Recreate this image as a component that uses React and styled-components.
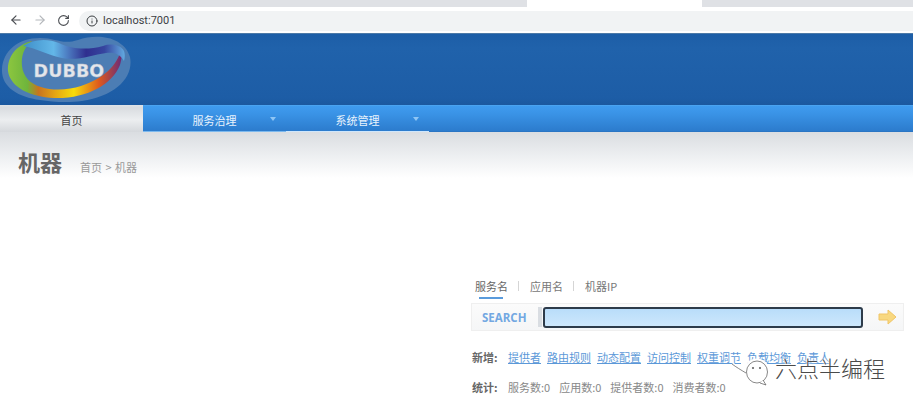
import React from "react";
import styled, { createGlobalStyle } from "styled-components";
import { ArrowLeft, ArrowRight, RotateCw, Info } from "lucide-react";

const Global = createGlobalStyle`
  html, body { margin: 0; padding: 0; background: #fff; }
  body { width: 913px; height: 408px; overflow: hidden; font-family: "Noto Sans CJK SC", "Liberation Sans", sans-serif; }
  * { box-sizing: border-box; }
`;

const Page = styled.div`
  position: relative;
  width: 913px;
  height: 408px;
  overflow: hidden;
  display: flex;
  flex-direction: column;
`;

const TabStrip = styled.div`
  height: 7px;
  background: #dfe1e5;
  display: flex;
  padding-left: 527px;
`;
const ActiveTab = styled.div`
  width: 175px;
  background: #fff;
`;

const Toolbar = styled.div`
  height: 26px;
  background: #fff;
  display: flex;
  align-items: center;
  padding-left: 9px;
`;
const NavIcon = styled.span`
  display: flex;
  width: 15px;
  margin-right: ${(p) => p.$gap}px;
  color: ${(p) => p.$color};
`;
const Omnibox = styled.div`
  flex: 1;
  height: 20px;
  margin-top: 1px;
  background: #f1f3f4;
  border-radius: 10px 0 0 10px;
  display: flex;
  align-items: center;
  gap: 5px;
  padding-left: 7px;
  font: 11px "Roboto", sans-serif;
  color: #3c4043;
`;

const Header = styled.header`
  height: 72px;
  background: linear-gradient(#1d5ea7, #2062ab 20%, #1d5da6 90%, #1b589f);
  border-top: 1px solid #4d7aa8;
  display: flex;
  align-items: flex-start;
`;

const Nav = styled.nav`
  height: 27px;
  display: flex;
  background: linear-gradient(#dfe3e8, #d9dce0 10%, #eceef0 55%, #d5d8dc);
`;
const HomeTab = styled.div`
  width: 143px;
  padding-top: 2px;
  display: flex;
  align-items: center;
  justify-content: center;
  font-size: 11px;
  color: #444;
`;
const NavBar = styled.div`
  flex: 1;
  display: flex;
  background: linear-gradient(#3f9bef, #3a93e6 30%, #2b7acb);
  border-top: 1px solid #4aa3f0;
  box-shadow: inset 0 -1px 0 #2a75c4;
`;
const NavItem = styled.div`
  width: 143px;
  height: 100%;
  padding-top: 2px;
  display: flex;
  align-items: center;
  justify-content: center;
  position: relative;
  font-size: 11px;
  color: #e9f3fd;
  border-bottom: 1px solid ${(p) => p.$line};
`;
const Caret = styled.span`
  position: absolute;
  right: 10px;
  top: 11px;
  width: 0;
  height: 0;
  border-left: 3px solid transparent;
  border-right: 3px solid transparent;
  border-top: 4px solid #8fc6f5;
`;

const TitleBand = styled.div`
  height: 46px;
  background: linear-gradient(#dadde1, #eef0f2 55%, #fff);
  display: flex;
  align-items: flex-start;
  padding: 13px 0 0 18px;
`;
const Title = styled.h1`
  margin: 0;
  font-size: 22px;
  line-height: 32px;
  font-weight: 700;
  color: #666;
`;
const Crumb = styled.span`
  margin: 14px 0 0 18px;
  font-size: 11px;
  line-height: 16px;
  word-spacing: 1px;
  color: #999;
`;

const Content = styled.main`
  flex: 1;
  padding: 99px 9px 0 471px;
  display: flex;
  flex-direction: column;
`;
const SearchTabs = styled.div`
  display: flex;
  align-items: center;
  height: 18px;
  padding-left: 4px;
  font-size: 11px;
  color: #777;
`;
const SearchTab = styled.span`
  position: relative;
  ${(p) => p.$active && "color: #666;"}
`;
const Underline = styled.i`
  position: absolute;
  left: 4px;
  right: 5px;
  bottom: -5px;
  height: 2px;
  background: #5a9bdc;
`;
const Divider = styled.span`
  width: 1px;
  height: 10px;
  margin: 0 11px 0 10px;
  background: #d5d5d5;
`;
const SearchBar = styled.div`
  margin-top: 8px;
  height: 28px;
  background: linear-gradient(#fbfbfb, #f5f6f7);
  border: 1px solid #efefef;
  display: flex;
  align-items: center;
`;
const SearchLabel = styled.span`
  width: 66px;
  padding-left: 10px;
  font: 700 11.5px "Open Sans", "Liberation Sans", sans-serif;
  color: #73a8e2;
`;
const SearchSeparator = styled.i`
  width: 4px;
  height: 20px;
  margin-right: 1px;
  background: #d9dde2;
`;
const SearchInput = styled.input`
  width: 320px;
  height: 21px;
  padding: 0;
  background: linear-gradient(#b9ddfa, #cde7fc);
  border: 2px solid #2d3b4a;
  border-radius: 3px;
  outline: none;
`;
const GoButton = styled.span`
  display: flex;
  margin-left: 15px;
`;
const InfoRow = styled.div`
  display: flex;
  align-items: center;
  gap: ${(p) => p.$gap}px;
  font-size: 11px;
  color: #888;
  height: 16px;
  margin-top: ${(p) => p.$top}px;
`;
const RowLabel = styled.b`
  width: ${(p) => 36 - p.$gap}px;
  margin-left: 1px;
  color: #666;
  font-weight: 700;
`;
const RowLink = styled.a`
  color: #5b98d8;
  text-decoration: underline;
`;

const Watermark = styled.div`
  position: absolute;
  left: 732px;
  top: 352px;
  display: flex;
  align-items: center;
  gap: 3px;
`;
const WatermarkText = styled.span`
  margin-bottom: 5px;
  font-size: 22px;
  font-weight: 300;
  line-height: 30px;
  color: #4a4a4a;
  text-shadow: 0 0 1px #fff, 0 0 2px #fff, 0 0 3px #fff;
`;

const Logo = () => (
  <svg width="134" height="71" viewBox="0 1 134 71">
    <defs>
      <linearGradient id="ring" x1="0" x2="1" y1="0" y2="0">
        <stop offset="0" stopColor="#8cc63f" />
        <stop offset="0.17" stopColor="#6fb53c" />
        <stop offset="0.27" stopColor="#c9741f" />
        <stop offset="0.42" stopColor="#e6a712" />
        <stop offset="0.58" stopColor="#f6dc0a" />
        <stop offset="0.8" stopColor="#df5a1d" />
        <stop offset="1" stopColor="#6b2a78" />
      </linearGradient>
      <linearGradient id="top" x1="0" x2="1" y1="0" y2="0">
        <stop offset="0" stopColor="#3f8fc9" />
        <stop offset="0.3" stopColor="#63b7e8" />
        <stop offset="0.62" stopColor="#2f2f8f" />
        <stop offset="0.8" stopColor="#36459f" />
        <stop offset="1" stopColor="#62a9e0" />
      </linearGradient>
    </defs>
    <path d="M2 36C3 18 18 5 40 5c16 0 22 7 38 2 20-7 46-3 52 17 4 20-14 39-48 44-14 2-30 1-42-1C18 64 1 54 2 36Z" fill="#4c7db4" />
    <path d="M32 8C16 12 7 24 8 38c2 16 22 26 46 27 32 1 58-13 66-33 2-7 2-11 1-16-3 16-18 30-40 37-12 4-28 5-40 1-11-3-18-11-19-21C21 23 24 14 32 8Z" fill="url(#ring)" />
    <path d="M23 13c10-7 24-8 36-3 10 5 26 8 44 3 8-3 18-1 21 5 1 3 1 6 0 10-4-7-10-9-18-8-14 2-28 8-44 5-14-3-26-10-39-12Z" fill="url(#top)" />
    <text x="33.500" y="44" fontFamily="'DejaVu Sans', sans-serif" fontWeight="700" fontSize="17.5" letterSpacing=".1" fill="#e3e6ec" stroke="#b8bfcb" strokeWidth=".3">DUBBO</text>
  </svg>
);

const GoArrow = () => (
  <svg width="19" height="16" viewBox="0 0 19 16">
    <path d="M1 5h9V1l8 7-8 7v-4H1Z" fill="#f8d880" stroke="#f0c566" strokeWidth="1" strokeLinejoin="round" />
  </svg>
);

const Bubbles = () => (
  <svg width="40" height="34" viewBox="0 0 40 34" fill="none" stroke="#555" strokeWidth=".7">
    <path d="M0 11c4 3 9 6 14 9" stroke="#fff" strokeWidth="4" />
    <ellipse cx="25" cy="19" rx="10.500" ry="11" stroke="#fff" strokeWidth="5" />
    <path d="M0 11c4 3 9 6 14 9" />
    <ellipse cx="25" cy="19" rx="10.500" ry="11" fill="#fff" />
    <path d="M31 27l3 5-6-2" fill="#fff" />
    <circle cx="21" cy="15" r=".7" fill="#555" />
    <circle cx="28" cy="15" r=".7" fill="#555" />
  </svg>
);

export default function App() {
  return (
    <Page>
      <Global />
      <TabStrip><ActiveTab /></TabStrip>
      <Toolbar>
        <NavIcon $gap={9} $color="#4a4d52"><ArrowLeft size={14} /></NavIcon>
        <NavIcon $gap={9} $color="#b4b7bb"><ArrowRight size={14} /></NavIcon>
        <NavIcon $gap={7} $color="#4a4d52"><RotateCw size={13} /></NavIcon>
        <Omnibox><Info size={12} />localhost:7001</Omnibox>
      </Toolbar>
      <Header><Logo /></Header>
      <Nav>
        <HomeTab>首页</HomeTab>
        <NavBar>
          <NavItem $line="#7db9ee">服务治理<Caret /></NavItem>
          <NavItem $line="#cfe6fb">系统管理<Caret /></NavItem>
        </NavBar>
      </Nav>
      <TitleBand>
        <Title>机器</Title>
        <Crumb>首页 &gt; 机器</Crumb>
      </TitleBand>
      <Content>
        <SearchTabs>
          <SearchTab $active>服务名<Underline /></SearchTab>
          <Divider />
          <SearchTab>应用名</SearchTab>
          <Divider />
          <SearchTab>机器IP</SearchTab>
        </SearchTabs>
        <SearchBar>
          <SearchLabel>SEARCH</SearchLabel>
          <SearchSeparator />
          <SearchInput />
          <GoButton><GoArrow /></GoButton>
        </SearchBar>
        <InfoRow $top={18} $gap={6}>
          <RowLabel $gap={6}>新增:</RowLabel>
          <RowLink>提供者</RowLink>
          <RowLink>路由规则</RowLink>
          <RowLink>动态配置</RowLink>
          <RowLink>访问控制</RowLink>
          <RowLink>权重调节</RowLink>
          <RowLink>负载均衡</RowLink>
          <RowLink>负责人</RowLink>
        </InfoRow>
        <InfoRow $top={14} $gap={9}>
          <RowLabel $gap={9}>统计:</RowLabel>
          <span>服务数:0</span>
          <span>应用数:0</span>
          <span>提供者数:0</span>
          <span>消费者数:0</span>
        </InfoRow>
      </Content>
      <Watermark><Bubbles /><WatermarkText>六点半编程</WatermarkText></Watermark>
    </Page>
  );
}
